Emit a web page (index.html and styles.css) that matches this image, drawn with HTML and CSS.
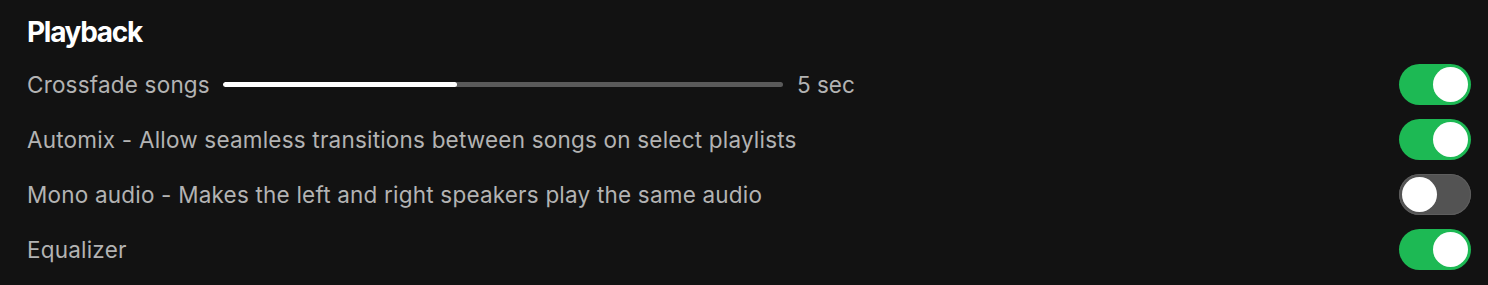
FILE: index.html
```html
<!DOCTYPE html>
<html>
<head>
<meta charset="utf-8">
<link rel="stylesheet" href="styles.css">
</head>
<body>
<section class="settings">
  <h2 class="title">Playback</h2>
  <div class="row">
    <div class="label-group">
      <span class="label">Crossfade songs</span>
      <div class="slider"><div class="slider-fill" style="width: 41.8%"></div></div>
      <span class="value">5 sec</span>
    </div>
    <div class="toggle on"><div class="knob"></div></div>
  </div>
  <div class="row">
    <span class="label">Automix - Allow seamless transitions between songs on select playlists</span>
    <div class="toggle on"><div class="knob"></div></div>
  </div>
  <div class="row">
    <span class="label">Mono audio - Makes the left and right speakers play the same audio</span>
    <div class="toggle"><div class="knob"></div></div>
  </div>
  <div class="row">
    <span class="label">Equalizer</span>
    <div class="toggle on"><div class="knob"></div></div>
  </div>
</section>
</body>
</html>
```
FILE: styles.css
```css
html, body {
  margin: 0;
  padding: 0;
  background: #121212;
}
body {
  font-family: Inter, "Noto Sans", sans-serif;
  width: 1488px;
  height: 285px;
  overflow: hidden;
}
.settings {
  padding: 14px 17px 0 27px;
}
.title {
  margin: 0 0 7px 0;
  font-size: 28px;
  line-height: 36px;
  font-weight: 700;
  color: #ffffff;
  letter-spacing: -1.3px;
}
.row {
  display: flex;
  align-items: center;
  justify-content: space-between;
  height: 55px;
}
.label-group {
  display: flex;
  align-items: center;
}
.label {
  font-size: 22.5px;
  color: #b3b3b3;
  letter-spacing: 0.2px;
}
.slider {
  width: 560px;
  height: 5px;
  border-radius: 3px;
  background: #5a5a5a;
  margin: 0 14px 0 13px;
  overflow: hidden;
}
.slider-fill {
  height: 100%;
  background: #ffffff;
  border-radius: 3px;
}
.value {
  font-size: 22.5px;
  color: #b3b3b3;
}
.toggle {
  width: 72px;
  height: 41px;
  border-radius: 21px;
  background: #535353;
  box-sizing: border-box;
  padding: 3px;
  display: flex;
  align-items: center;
  justify-content: flex-start;
  box-shadow: inset 0 0 0 1px #5e5e5e;
}
.toggle.on {
  background: #1db954;
  box-shadow: none;
  justify-content: flex-end;
}
.knob {
  width: 35px;
  height: 35px;
  border-radius: 50%;
  background: #ffffff;
}
```
